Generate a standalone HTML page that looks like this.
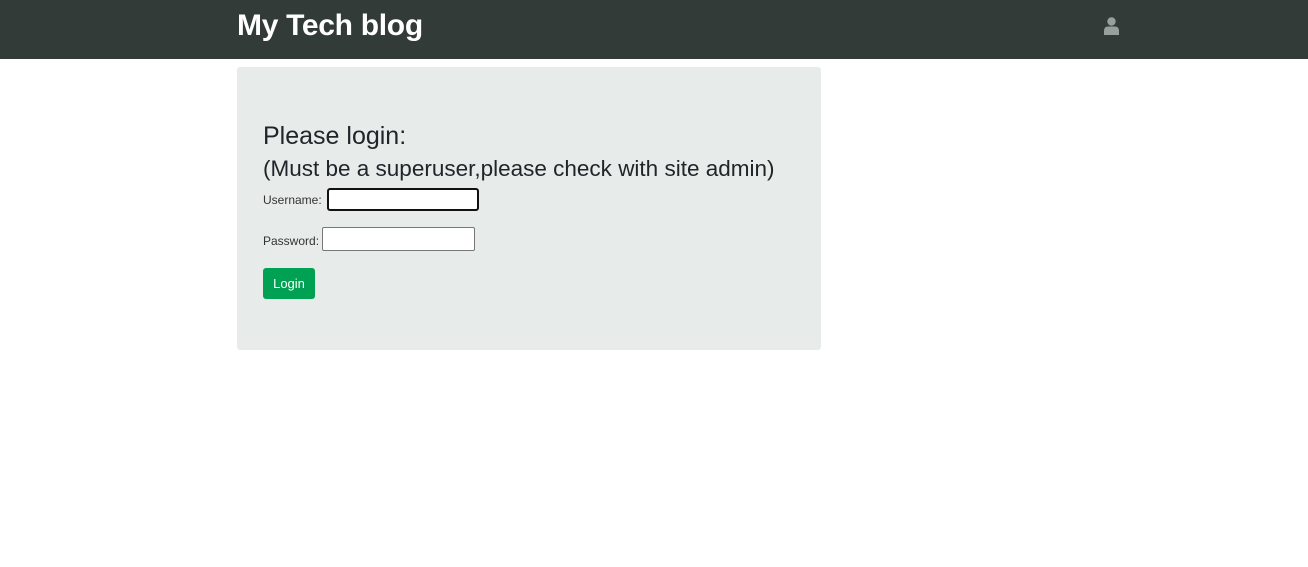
<!DOCTYPE html>
<html><head><style>
body{margin:0;background:#fff;font-family:"Liberation Sans",sans-serif;color:#212529}
.nav{position:absolute;left:0;top:0;width:1308px;height:59px;background:#333b38}
.brand{position:absolute;left:237px;top:9px;font-size:30px;font-weight:bold;color:#fff;letter-spacing:-0.3px}
.icon{position:absolute;left:1104px;top:17px}
.panel{position:absolute;left:237px;top:67px;width:584px;height:283px;background:#e7ecea;border-radius:3px}
h1{position:absolute;left:26px;top:55px;margin:0;font-size:25px;font-weight:normal;white-space:nowrap}
h2{position:absolute;left:26px;top:89px;margin:0;font-size:22.5px;font-weight:normal;white-space:nowrap}
.lab{position:absolute;left:26px;font-size:12px;color:#333}
input{position:absolute;height:22px;box-sizing:border-box;background:#fff;border:1px solid #777;border-radius:2px;padding:0}
.btn{position:absolute;left:26px;top:201px;width:52px;height:31px;background:#00a152;color:#fff;font-size:13px;border-radius:3px;text-align:center;line-height:31px}
</style></head><body>
<div class="nav"><div class="brand">My Tech blog</div>
<svg class="icon" width="15" height="18" viewBox="0 0 15 18"><circle cx="7.5" cy="4.5" r="4.2" fill="#999f9c"/><path d="M0 18V14Q0 9.5 4 9.5H11Q15 9.5 15 14V18Z" fill="#999f9c"/></svg>
</div>
<div class="panel">
<h1>Please login:</h1>
<h2>(Must be a superuser,please check with site admin)</h2>
<div class="lab" style="top:126px">Username:</div>
<input style="left:90px;top:121px;width:152px;height:23px;border:2px solid #111;border-radius:3px">
<div class="lab" style="top:167px">Password:</div>
<input style="left:85px;top:160px;width:153px;height:24px">
<div class="btn">Login</div>
</div>
</body></html>
